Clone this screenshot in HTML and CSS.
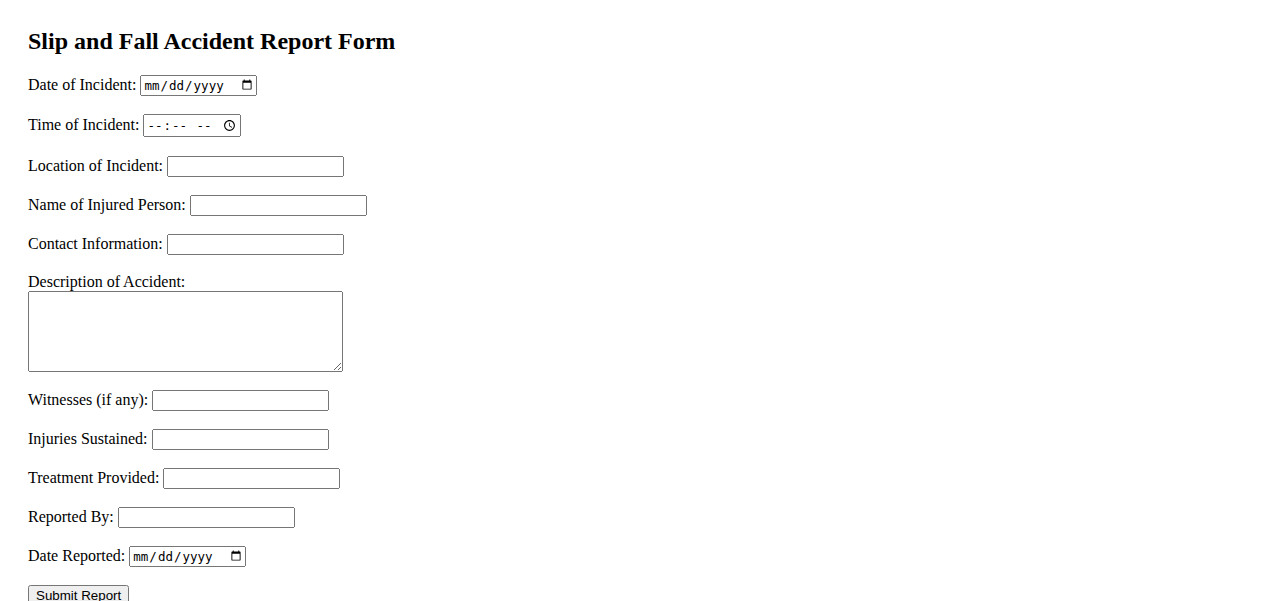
FILE: index.html
```html
<!DOCTYPE html>
<html>
<head>
<meta charset="utf-8">
<title>Slip and Fall Accident Report Form</title>
<link rel="stylesheet" href="styles.css">
</head>
<body>
<div class="page">
  <h2 class="title">Slip and Fall Accident Report Form</h2>
  <form class="report">
    <div class="row"><label for="d1">Date of Incident:</label> <input type="date" id="d1" class="date"></div>
    <div class="row row-time"><label for="t1">Time of Incident:</label> <input type="time" id="t1" class="time"></div>
    <div class="row"><label for="loc">Location of Incident:</label> <input type="text" id="loc" class="text"></div>
    <div class="row"><label for="name">Name of Injured Person:</label> <input type="text" id="name" class="text"></div>
    <div class="row"><label for="contact">Contact Information:</label> <input type="text" id="contact" class="text"></div>
    <div class="row"><label for="desc" class="block">Description of Accident:</label><textarea id="desc" class="desc"></textarea></div>
    <div class="row"><label for="wit">Witnesses (if any):</label> <input type="text" id="wit" class="text"></div>
    <div class="row"><label for="inj">Injuries Sustained:</label> <input type="text" id="inj" class="text"></div>
    <div class="row"><label for="treat">Treatment Provided:</label> <input type="text" id="treat" class="text"></div>
    <div class="row"><label for="rep">Reported By:</label> <input type="text" id="rep" class="text"></div>
    <div class="row"><label for="d2">Date Reported:</label> <input type="date" id="d2" class="date"></div>
    <div class="row"><button type="submit" class="submit">Submit Report</button></div>
  </form>
</div>
</body>
</html>
```
FILE: styles.css
```css
body {
  margin: 0;
  font-family: "Liberation Serif", "Times New Roman", serif;
  font-size: 16px;
  color: #000;
  background: #fff;
}
.page {
  padding: 28px 28px 0 28px;
}
.title {
  margin: 0 0 20px 0;
  font-size: 24px;
  font-weight: bold;
}
.row {
  margin-bottom: 18px;
}
.row-time {
  margin-bottom: 19px;
}
.block {
  display: block;
}
.text {
  box-sizing: border-box;
  width: 177px;
  height: 21px;
}
.date {
  box-sizing: border-box;
  width: 117px;
  height: 21px;
  font-size: 12.5px;
}
.time {
  box-sizing: border-box;
  width: 98px;
  height: 23px;
  font-size: 12.5px;
}
.desc {
  display: block;
  width: 315px;
  height: 81px;
  box-sizing: border-box;
}
.submit {
  font-family: "Liberation Sans", Arial, sans-serif;
  font-size: 13.33px;
}
```
